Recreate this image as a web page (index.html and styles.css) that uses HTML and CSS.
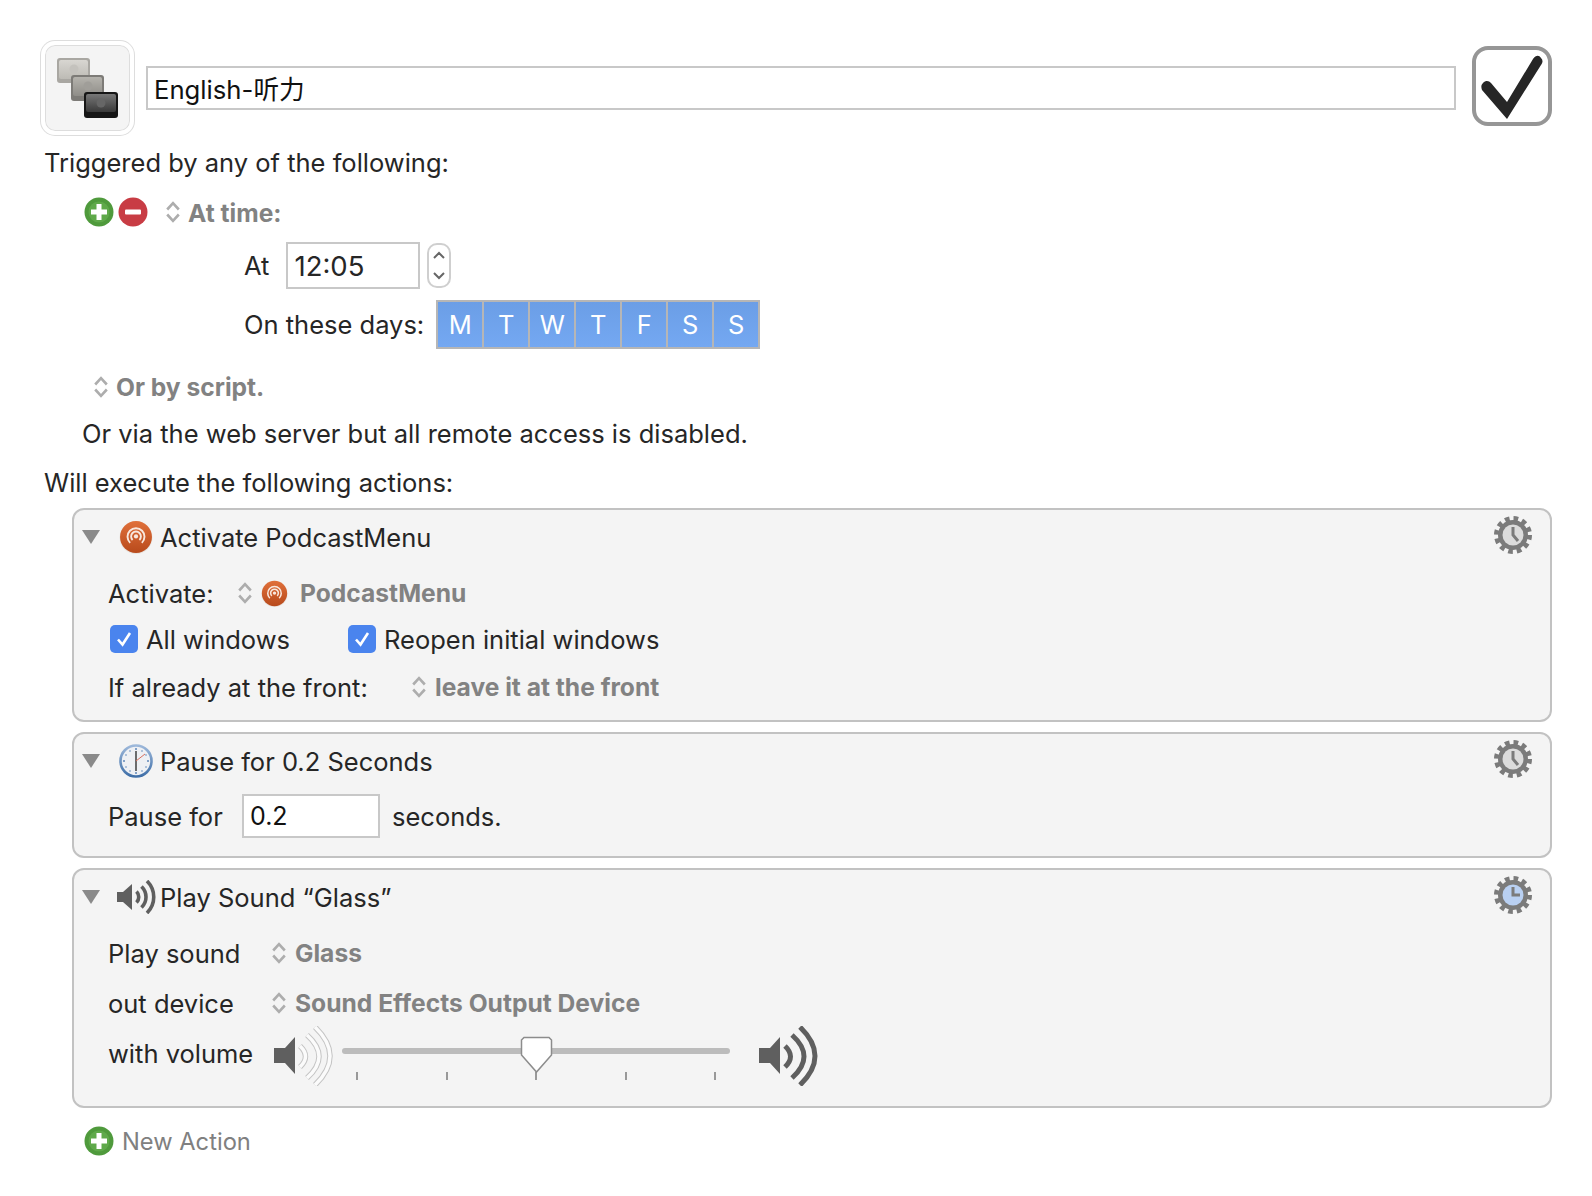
FILE: index.html
```html
<!DOCTYPE html>
<html>
<head>
    <title>English-听力</title>
    <link rel="stylesheet" href="styles.css">
</head>
<body>
    <svg class="defs" width="0" height="0">
        <defs>
            <linearGradient id="podcastFill" x1="0" y1="0" x2="0" y2="1">
                <stop offset="0" stop-color="#e0703a"/>
                <stop offset="1" stop-color="#b84a1c"/>
            </linearGradient>
            <linearGradient id="capLight" x1="0" y1="0" x2="0" y2="1">
                <stop offset="0" stop-color="#d8d6d1"/>
                <stop offset="1" stop-color="#bdbbb5"/>
            </linearGradient>
            <linearGradient id="capMid" x1="0" y1="0" x2="0" y2="1">
                <stop offset="0" stop-color="#b5b3ad"/>
                <stop offset="1" stop-color="#8f8d88"/>
            </linearGradient>
            <linearGradient id="capDark" x1="0" y1="0" x2="0" y2="1">
                <stop offset="0" stop-color="#777"/>
                <stop offset="1" stop-color="#3a3a3a"/>
            </linearGradient>
            <linearGradient id="clockRim" x1="0" y1="0" x2="0" y2="1">
                <stop offset="0" stop-color="#9db8da"/>
                <stop offset="1" stop-color="#3f6fa8"/>
            </linearGradient>
            <symbol id="plus" viewBox="0 0 30 30">
                <circle cx="15" cy="15" r="14.500" fill="#4f9a3c"/>
                <circle cx="15" cy="15" r="10.500" fill="#5fa94a"/>
                <path d="M12.500 7h5v5.500H23v5h-5.500V23h-5v-5.500H7v-5h5.500z" fill="#fff"/>
            </symbol>
            <symbol id="minus" viewBox="0 0 30 30">
                <circle cx="15" cy="15" r="14.500" fill="#c83c44"/>
                <rect x="7" y="12.500" width="16" height="5" rx="1" fill="#fff"/>
            </symbol>
            <symbol id="updown" viewBox="0 0 14 22">
                <path d="M1.200 8.500 7 2.200l5.800 6.300M1.200 13.500 7 19.800l5.800-6.300" fill="none" stroke="#adadad" stroke-width="2.600"/>
            </symbol>
            <symbol id="podcast" viewBox="0 0 32 32">
                <circle cx="16" cy="16.500" r="15.500" fill="#e8e4e0"/>
                <circle cx="16" cy="16" r="15" fill="url(#podcastFill)"/>
                <g fill="none" stroke="#f8e8de" stroke-width="1.800">
                    <path d="M10.500 21.500a8 8 0 1 1 11 0"/>
                    <path d="M12.800 18.800a4.600 4.600 0 1 1 6.400 0"/>
                </g>
                <circle cx="16" cy="15.500" r="2" fill="#f8e8de"/>
            </symbol>
            <symbol id="triangle" viewBox="0 0 18 14">
                <path d="M0 0h18L9 14z" fill="#8a8a8a"/>
            </symbol>
            <symbol id="gear" viewBox="0 0 38 38">
                <circle cx="19" cy="19" r="16" fill="none" stroke="#7b7b7b" stroke-width="6" stroke-dasharray="4.500 3.880"/>
                <circle cx="19" cy="19" r="15" fill="#7b7b7b"/>
            </symbol>
        </defs>
    </svg>

    <div class="page">
        <div class="title-row">
            <div class="app-icon">
                <svg width="66" height="66" viewBox="0 0 66 66">
                    <rect x="0" y="0" width="33" height="25" rx="3" fill="#a9a7a2"/>
                    <rect x="2" y="2" width="29" height="19" rx="2" fill="url(#capLight)"/>
                    <circle cx="17" cy="11" r="4.500" fill="#c4c2bd"/>
                    <rect x="14" y="17" width="33" height="26" rx="3" fill="#7d7b77"/>
                    <rect x="16" y="19" width="29" height="19" rx="2" fill="url(#capMid)"/>
                    <circle cx="31" cy="28" r="4.500" fill="#a09e99"/>
                    <rect x="27" y="34" width="34" height="26" rx="3" fill="#161616"/>
                    <rect x="29" y="36" width="30" height="18" rx="2" fill="url(#capDark)"/>
                    <circle cx="44" cy="45" r="4.500" fill="#666"/>
                </svg>
            </div>
            <div class="title-box">English-听力</div>
            <div class="enable-box">
                <svg width="72" height="72" viewBox="0 0 72 72">
                    <path d="M7 33C10 30 13 31 15 33L31 52 57 9C60 5 63 5 65 8 67 10 67 12 65 15L31 69 6 40C5 37 5 35 7 33z" fill="#262626"/>
                </svg>
            </div>
        </div>

        <div class="heading triggered">Triggered by any of the following:</div>

        <div class="trigger">
            <div class="row at-time">
                <svg class="round-btn"><use href="#plus"/></svg>
                <svg class="round-btn minus-btn"><use href="#minus"/></svg>
                <svg class="updown time-updown"><use href="#updown"/></svg>
                <span class="popup">At time:</span>
            </div>
            <div class="row at-row">
                <span class="label">At</span>
                <div class="field time-field">12:05</div>
                <div class="stepper">
                    <svg width="24" height="45" viewBox="0 0 24 45">
                        <rect x="1" y="1" width="22" height="43" rx="9" fill="#fff" stroke="#cfcfcf" stroke-width="2"/>
                        <path d="M7 15l5-5 5 5M7 30l5 5 5-5" fill="none" stroke="#666" stroke-width="2"/>
                    </svg>
                </div>
            </div>
            <div class="row days-row">
                <span class="label">On these days:</span>
                <div class="days">
                    <span class="day">M</span>
                    <span class="day">T</span>
                    <span class="day">W</span>
                    <span class="day">T</span>
                    <span class="day">F</span>
                    <span class="day">S</span>
                    <span class="day">S</span>
                </div>
            </div>
            <div class="row script-row">
                <svg class="updown"><use href="#updown"/></svg>
                <span class="popup">Or by script.</span>
            </div>
            <div class="row web-row">Or via the web server but all remote access is disabled.</div>
        </div>

        <div class="heading will">Will execute the following actions:</div>

        <div class="actions">
            <div class="card">
                <div class="card-head">
                    <svg class="triangle"><use href="#triangle"/></svg>
                    <svg class="head-icon"><use href="#podcast"/></svg>
                    <span class="card-title">Activate PodcastMenu</span>
                    <svg class="gear"><use href="#gear"/><circle cx="19" cy="19" r="10.500" fill="#dcdcdc"/><path d="M19 11V19l5 6" fill="none" stroke="#7b7b7b" stroke-width="3"/></svg>
                </div>
                <div class="card-body tall-first">
                    <div class="row">
                        <span class="col-activate">Activate:</span>
                        <svg class="updown"><use href="#updown"/></svg>
                        <svg class="small-podcast"><use href="#podcast"/></svg>
                        <span class="popup">PodcastMenu</span>
                    </div>
                    <div class="row">
                        <span class="check"><svg width="28" height="28" viewBox="0 0 28 28"><path d="M8 14.500l4.500 5L20 8" fill="none" stroke="#fff" stroke-width="2.600"/></svg></span>
                        <span class="check-label">All windows</span>
                        <span class="check second-check"><svg width="28" height="28" viewBox="0 0 28 28"><path d="M8 14.500l4.500 5L20 8" fill="none" stroke="#fff" stroke-width="2.600"/></svg></span>
                        <span class="check-label">Reopen initial windows</span>
                    </div>
                    <div class="row">
                        <span class="col-front">If already at the front:</span>
                        <svg class="updown"><use href="#updown"/></svg>
                        <span class="popup">leave it at the front</span>
                    </div>
                </div>
            </div>

            <div class="card">
                <div class="card-head">
                    <svg class="triangle"><use href="#triangle"/></svg>
                    <svg class="head-icon" viewBox="0 0 34 34">
                        <circle cx="17" cy="17" r="15.500" fill="#eef0f4" stroke="url(#clockRim)" stroke-width="2.600"/>
                        <g fill="#5f87b8">
                            <circle cx="17" cy="5" r="1"/><circle cx="29" cy="17" r="1"/><circle cx="5" cy="17" r="1"/><circle cx="17" cy="29" r="1"/>
                            <circle cx="23" cy="7" r=".8"/><circle cx="27" cy="11" r=".8"/><circle cx="27" cy="23" r=".8"/><circle cx="23" cy="27" r=".8"/>
                            <circle cx="11" cy="27" r=".8"/><circle cx="7" cy="23" r=".8"/><circle cx="7" cy="11" r=".8"/><circle cx="11" cy="7" r=".8"/>
                        </g>
                        <path d="M17 7v20" stroke="#333" stroke-width="1.400"/>
                        <path d="M17 17l9-7" stroke="#d9705f" stroke-width="1"/>
                    </svg>
                    <span class="card-title">Pause for 0.2 Seconds</span>
                    <svg class="gear"><use href="#gear"/><circle cx="19" cy="19" r="10.500" fill="#dcdcdc"/><path d="M19 11V19l5 6" fill="none" stroke="#7b7b7b" stroke-width="3"/></svg>
                </div>
                <div class="card-body">
                    <div class="row">
                        <span class="col-pause">Pause for</span>
                        <div class="field pause-field">0.2</div>
                        <span class="seconds">seconds.</span>
                    </div>
                </div>
            </div>

            <div class="card">
                <div class="card-head">
                    <svg class="triangle"><use href="#triangle"/></svg>
                    <svg class="head-icon sound-icon" viewBox="0 0 40 34">
                        <path d="M0 12h6l9-8v26l-9-8H0z" fill="#5f5f5f"/>
                        <g fill="none" stroke="#5f5f5f" stroke-width="3.600">
                            <path d="M19.500 11.500c3 3 3 8 0 11"/>
                            <path d="M24.500 6.500c6 6 6 15 0 21"/>
                            <path d="M30 1c9 9 9 23 0 32"/>
                        </g>
                    </svg>
                    <span class="card-title">Play Sound “Glass”</span>
                    <svg class="gear"><use href="#gear"/><circle cx="19" cy="19" r="10.500" fill="#b9d0f2"/><path d="M19 11V19h7" fill="none" stroke="#7b7b7b" stroke-width="3"/></svg>
                </div>
                <div class="card-body sound-body">
                    <div class="row">
                        <span class="col-sound">Play sound</span>
                        <svg class="updown"><use href="#updown"/></svg>
                        <span class="popup">Glass</span>
                    </div>
                    <div class="row">
                        <span class="col-sound">out device</span>
                        <svg class="updown"><use href="#updown"/></svg>
                        <span class="popup">Sound Effects Output Device</span>
                    </div>
                    <div class="row">
                        <span class="col-volume">with volume</span>
                        <svg class="speaker" width="60" height="60" viewBox="0 0 60 60">
                            <path d="M0 22h11L21 11v37L11 37H0z" fill="#5f5f5f"/>
                            <g fill="none" stroke="#c4c4c4" stroke-width="5.500">
                                <path d="M26 20Q37 30.500 26 41"/>
                                <path d="M33 9Q57 30.500 33 52"/>
                                <path d="M41 1Q71 30 41 59"/>
                            </g>
                            <g fill="none" stroke="#fbfbfb" stroke-width="3.500">
                                <path d="M26 20Q37 30.500 26 41"/>
                                <path d="M33 9Q57 30.500 33 52"/>
                                <path d="M41 1Q71 30 41 59"/>
                            </g>
                        </svg>
                        <div class="slider">
                            <div class="slider-track"></div>
                            <div class="ticks">
                                <i></i><i></i><i></i><i></i><i></i>
                            </div>
                            <svg class="slider-thumb" width="33" height="38" viewBox="0 0 33 38">
                                <path d="M4 1.500h25l2.500 2.500v15L16.500 36 1.500 19V4z" fill="#fff" stroke="#8c8c8c" stroke-width="1.500"/>
                            </svg>
                        </div>
                        <svg class="speaker" width="60" height="60" viewBox="0 0 60 60">
                            <path d="M0 22h11L21 11v37L11 37H0z" fill="#5f5f5f"/>
                            <g fill="none" stroke="#5f5f5f" stroke-width="5">
                                <path d="M26 20Q37 30.500 26 41"/>
                                <path d="M33 9Q57 30.500 33 52"/>
                                <path d="M41 1Q71 30 41 59"/>
                            </g>
                        </svg>
                    </div>
                </div>
            </div>
        </div>

        <div class="new-action">
            <svg class="round-btn"><use href="#plus"/></svg>
            <span>New Action</span>
        </div>
    </div>
</body>
</html>
```

FILE: styles.css
```css
html, body {
    margin: 0;
    padding: 0;
    background-color: #fff;
}
body {
    font-family: Inter, "Noto Sans CJK SC", sans-serif;
    font-size: 25.5px;
    color: #262626;
}
.defs {
    position: absolute;
}
.page {
    width: 1511px;
    padding: 41px 40px 0 41px;
}
.row {
    display: flex;
    align-items: center;
}

/* title */
.title-row {
    display: flex;
    align-items: center;
    height: 94px;
}
.app-icon {
    box-sizing: border-box;
    width: 93px;
    height: 94px;
    padding: 13px 0 0 12px;
    background-color: #f4f4f4;
    border: 4px solid #fff;
    border-radius: 14px;
    box-shadow: 0 0 0 1px #ddd, inset 0 0 0 1px #ddd;
}
.title-box {
    box-sizing: border-box;
    flex: 1;
    height: 44px;
    margin: 0 16px 0 12px;
    padding: 1px 0 0 6px;
    line-height: 42px;
    font-size: 25.7px;
    color: #111;
    border: 2px solid #c8c8c8;
}
.enable-box {
    box-sizing: border-box;
    width: 80px;
    height: 80px;
    margin-top: -5px;
    border: 4px solid #969696;
    border-radius: 16px;
}

/* triggers */
.heading {
    height: 40px;
    line-height: 40px;
    margin-left: 3px;
}
.triggered {
    margin-top: 8px;
}
.trigger {
    padding-left: 43px;
}
.round-btn {
    width: 30px;
    height: 30px;
}
.minus-btn {
    margin-left: 4px;
}
.updown {
    width: 14px;
    height: 22px;
    flex-shrink: 0;
    margin-right: 9px;
}
.time-updown {
    margin-left: 18px;
    margin-right: 8px;
}
.popup {
    font-size: 24.6px;
    font-weight: 700;
    color: #828282;
}
.at-time {
    height: 40px;
    margin-top: 9px;
}
.at-time .popup {
    padding-top: 2px;
}
.at-row {
    height: 47px;
    margin-top: 10px;
    padding-left: 160px;
}
.label {
    margin-right: 17px;
}
.field {
    box-sizing: border-box;
    background-color: #fff;
    border: 2px solid #c8c8c8;
    padding-left: 6px;
    display: flex;
    align-items: center;
}
.time-field {
    width: 134px;
    height: 47px;
    font-size: 27.5px;
}
.stepper {
    display: flex;
    margin-left: 7px;
}
.days-row {
    height: 50px;
    margin-top: 10px;
    padding-left: 160px;
}
.days-row .label {
    margin-right: 12px;
}
.days {
    display: flex;
    gap: 2px;
    padding: 2px;
    background-color: #b6b6b6;
}
.day {
    width: 44px;
    height: 45px;
    line-height: 46px;
    text-align: center;
    color: #fff;
    background-image: linear-gradient(#6b9ee6, #74a8f2);
}
.script-row {
    height: 40px;
    margin-top: 18px;
    padding-left: 10px;
}
.script-row .updown {
    margin-right: 8px;
}
.web-row {
    height: 40px;
    margin: 6px 0 0 -2px;
}
.will {
    margin-top: 10px;
}

/* action cards */
.actions {
    display: flex;
    flex-direction: column;
    gap: 10px;
    margin: 5px 0 0 31px;
}
.card {
    box-sizing: border-box;
    background-color: #f4f4f4;
    border: 2px solid #c2c2c2;
    border-radius: 12px;
}
.card-head {
    display: flex;
    align-items: center;
    height: 54px;
    padding: 0 18px 0 8px;
}
.triangle {
    width: 18px;
    height: 14px;
    margin-right: 19px;
}
.head-icon {
    width: 34px;
    height: 34px;
    margin-right: 7px;
}
.sound-icon {
    width: 40px;
    margin-left: -2px;
    margin-right: 3px;
}
.card-title {
    flex: 1;
}
.gear {
    width: 38px;
    height: 38px;
    margin-top: -4px;
}
.card-body {
    padding: 5px 0 17px 34px;
}
.card-body .row {
    height: 46px;
}
.tall-first {
    padding-top: 6px;
    padding-bottom: 10px;
}
.tall-first .row:last-child {
    margin-top: 2px;
}
.sound-body {
    padding-top: 4px;
    padding-bottom: 28px;
}
.sound-body .row {
    height: 50px;
}
.col-activate {
    width: 130px;
}
.small-podcast {
    width: 27px;
    height: 27px;
    margin-right: 12px;
}
.check {
    display: block;
    width: 28px;
    height: 28px;
    margin-left: 2px;
    border-radius: 5px;
    background-color: #4a84ee;
}
.check-label {
    margin-left: 8px;
}
.second-check {
    margin-left: 58px;
}
.col-front {
    width: 304px;
}
.col-pause {
    width: 134px;
}
.pause-field {
    width: 138px;
    height: 44px;
    font-size: 25px;
    color: #111;
}
.seconds {
    margin-left: 12px;
}
.col-sound {
    width: 164px;
}
.col-volume {
    width: 166px;
}
.speaker {
    margin-top: 6px;
}
.slider {
    position: relative;
    width: 388px;
    height: 50px;
    margin: 0 29px 0 8px;
}
.slider-track {
    height: 6px;
    margin-top: 20px;
    background-color: #bcbcbc;
    border-radius: 3px;
}
.ticks {
    display: flex;
    justify-content: space-between;
    margin: 18px 14px 0;
}
.ticks i {
    width: 2px;
    height: 8px;
    background-color: #999;
}
.slider-thumb {
    position: absolute;
    left: 178px;
    top: 8px;
}

/* footer */
.new-action {
    display: flex;
    align-items: center;
    gap: 8px;
    height: 40px;
    margin: 13px 0 0 43px;
    font-size: 23.7px;
    color: #808080;
}
```
